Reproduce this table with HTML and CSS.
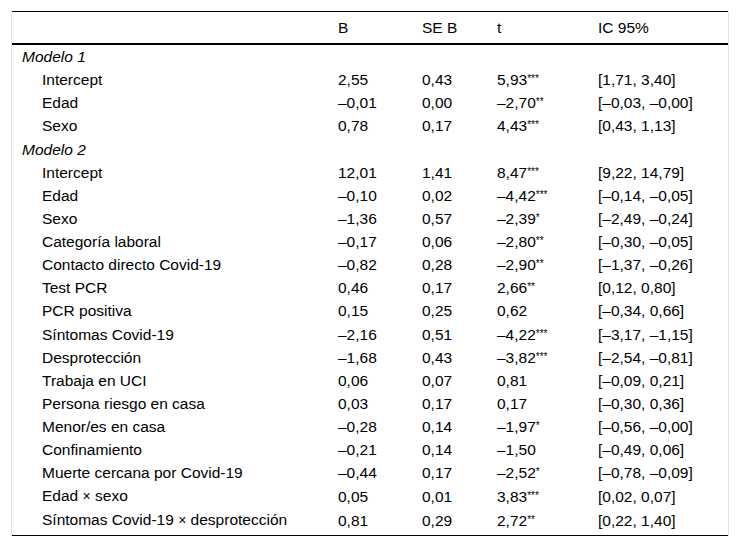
FILE: index.html
```html
<!DOCTYPE html>
<html lang="es">
<head>
<meta charset="utf-8">
<title>Tabla</title>
<link rel="stylesheet" href="styles.css">
</head>
<body>
<div class="frame">
<table class="results">
<colgroup>
<col class="c-label"><col class="c-b"><col class="c-se"><col class="c-t"><col class="c-ic">
</colgroup>
<thead>
<tr><th></th><th>B</th><th>SE B</th><th>t</th><th>IC 95%</th></tr>
</thead>
<tbody>
<tr><td class="group" colspan="5">Modelo 1</td></tr>
<tr><td class="ind">Intercept</td><td>2,55</td><td>0,43</td><td>5,93<span class="st">***</span></td><td>[1,71, 3,40]</td></tr>
<tr><td class="ind">Edad</td><td>–0,01</td><td>0,00</td><td>–2,70<span class="st">**</span></td><td>[–0,03, –0,00]</td></tr>
<tr><td class="ind">Sexo</td><td>0,78</td><td>0,17</td><td>4,43<span class="st">***</span></td><td>[0,43, 1,13]</td></tr>
<tr><td class="group" colspan="5">Modelo 2</td></tr>
<tr><td class="ind">Intercept</td><td>12,01</td><td>1,41</td><td>8,47<span class="st">***</span></td><td>[9,22, 14,79]</td></tr>
<tr><td class="ind">Edad</td><td>–0,10</td><td>0,02</td><td>–4,42<span class="st">***</span></td><td>[–0,14, –0,05]</td></tr>
<tr><td class="ind">Sexo</td><td>–1,36</td><td>0,57</td><td>–2,39<span class="st">*</span></td><td>[–2,49, –0,24]</td></tr>
<tr><td class="ind">Categoría laboral</td><td>–0,17</td><td>0,06</td><td>–2,80<span class="st">**</span></td><td>[–0,30, –0,05]</td></tr>
<tr><td class="ind">Contacto directo Covid-19</td><td>–0,82</td><td>0,28</td><td>–2,90<span class="st">**</span></td><td>[–1,37, –0,26]</td></tr>
<tr><td class="ind">Test PCR</td><td>0,46</td><td>0,17</td><td>2,66<span class="st">**</span></td><td>[0,12, 0,80]</td></tr>
<tr><td class="ind">PCR positiva</td><td>0,15</td><td>0,25</td><td>0,62</td><td>[–0,34, 0,66]</td></tr>
<tr><td class="ind">Síntomas Covid-19</td><td>–2,16</td><td>0,51</td><td>–4,22<span class="st">***</span></td><td>[–3,17, –1,15]</td></tr>
<tr><td class="ind">Desprotección</td><td>–1,68</td><td>0,43</td><td>–3,82<span class="st">***</span></td><td>[–2,54, –0,81]</td></tr>
<tr><td class="ind">Trabaja en UCI</td><td>0,06</td><td>0,07</td><td>0,81</td><td>[–0,09, 0,21]</td></tr>
<tr><td class="ind">Persona riesgo en casa</td><td>0,03</td><td>0,17</td><td>0,17</td><td>[–0,30, 0,36]</td></tr>
<tr><td class="ind">Menor/es en casa</td><td>–0,28</td><td>0,14</td><td>–1,97<span class="st">*</span></td><td>[–0,56, –0,00]</td></tr>
<tr><td class="ind">Confinamiento</td><td>–0,21</td><td>0,14</td><td>–1,50</td><td>[–0,49, 0,06]</td></tr>
<tr><td class="ind">Muerte cercana por Covid-19</td><td>–0,44</td><td>0,17</td><td>–2,52<span class="st">*</span></td><td>[–0,78, –0,09]</td></tr>
<tr><td class="ind">Edad <span class="x">×</span> sexo</td><td>0,05</td><td>0,01</td><td>3,83<span class="st">***</span></td><td>[0,02, 0,07]</td></tr>
<tr class="last"><td class="ind">Síntomas Covid-19 <span class="x">×</span> desprotección</td><td>0,81</td><td>0,29</td><td>2,72<span class="st">**</span></td><td>[0,22, 1,40]</td></tr>
</tbody>
</table>
</div>
</body>
</html>
```
FILE: styles.css
```css
html, body {
  margin: 0;
  padding: 0;
  background: #fff;
}
body {
  padding: 11px;
  font-family: "Liberation Sans", Arial, sans-serif;
  font-size: 15.5px;
  color: #000;
}
.frame {
  width: 718px;
  box-sizing: border-box;
  border-left: 1px solid #e3e3e3;
  border-right: 1px solid #e3e3e3;
}
.results {
  width: 716px;
  table-layout: fixed;
  border-collapse: separate;
  border-spacing: 0;
}
.c-label { width: 316px; }
.c-b { width: 84px; }
.c-se { width: 75px; }
.c-t { width: 101px; }
.c-ic { width: 140px; }
.results th {
  font-weight: normal;
  text-align: left;
  padding: 7px 10px;
  line-height: 17px;
  border-top: 1px solid #000;
  border-bottom: 2px solid #000;
}
.results td {
  text-align: left;
  padding: 3px 10px;
  height: 23.13px;
  box-sizing: border-box;
  line-height: 17px;
  white-space: nowrap;
}
.results td.group {
  font-style: italic;
}
.results td.ind {
  padding-left: 30px;
}
.results tr.last td {
  height: 25.6px;
  padding-bottom: 5.6px;
  border-bottom: 1px solid #000;
}
.st {
  font-size: 10px;
  vertical-align: 3px;
  line-height: 0;
}
.x {
  font-size: 14px;
}
```
